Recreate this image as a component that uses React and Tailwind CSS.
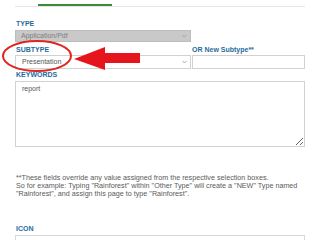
import React from "react";

const Chevron = () => (
  <svg width="5" height="4" viewBox="0 0 5 4" className="shrink-0">
    <path d="M0.5 1 L2.5 3 L4.5 1" fill="none" stroke="#9a9a9a" strokeWidth="0.8" />
  </svg>
);

const Label = ({ children, className = "" }) => (
  <div className={`text-[7px] leading-[8px] font-bold text-[#1f6c9c] ${className}`}>
    {children}
  </div>
);

const App = () => {
  return (
    <div className="relative w-[320px] h-[240px] overflow-hidden bg-white font-['Liberation_Sans',Arial,sans-serif]">
      <div className="px-[15px]">
        {/* tab strip */}
        <div className="pt-[4px] border-b border-[#e6e6e6]">
          <div className="ml-[23px] w-[74px] h-[2px] bg-[#3a8a3e]" />
        </div>

        <Label className="mt-[13px] pl-[1px]">TYPE</Label>
        <div className="mt-[2px] w-[176px] h-[12px] bg-[#c9c9c9] border border-[#bdbdbd] flex items-center justify-between pl-[5px] pr-[3px]">
          <span className="text-[7px] text-[#7d7d7d]">Application/Pdf</span>
          <Chevron />
        </div>

        <div className="mt-[4px] grid grid-cols-[177px_113px]">
          <div>
            <Label className="pl-[1px]">SUBTYPE</Label>
            <div className="mt-[1px] w-[176px] h-[14px] bg-white border border-[#d2d2d2] flex items-center justify-between pl-[6px] pr-[3px]">
              <span className="text-[7px] text-[#555]">Presentation</span>
              <Chevron />
            </div>
          </div>
          <div>
            <Label>OR New Subtype**</Label>
            <div className="mt-[1px] h-[14px] bg-white border border-[#d2d2d2]" />
          </div>
        </div>

        <Label className="mt-[2px] pl-[1px]">KEYWORDS</Label>
        <textarea
          readOnly
          defaultValue="report"
          className="block mt-[2px] w-[290px] h-[66px] border border-[#d2d2d2] px-[6px] py-[3px] text-[7px] leading-[8px] text-[#555] outline-none"
        />

        <p className="mt-[27px] pl-[1px] text-[7.2px] leading-[8px] text-[#5a5a5a]">
          **These fields override any value assigned from the respective selection boxes.
          <br />
          So for example: Typing "Rainforest" within "Other Type" will create a "NEW" Type named
          <br />
          "Rainforest", and assign this page to type "Rainforest".
        </p>

        <Label className="mt-[27px] pl-[1px]">ICON</Label>
        <div className="mt-[2px] w-[290px] h-[14px] border border-[#d8d8d8]" />
      </div>

      {/* red annotation overlay */}
      <svg
        className="absolute left-0 top-0 pointer-events-none"
        width="320"
        height="240"
        viewBox="0 0 320 240"
      >
        <ellipse cx="37" cy="56" rx="34" ry="15" fill="none" stroke="#e0241f" strokeWidth="2" />
        <polygon
          points="74,59 105,47 105,53 140,53 140,63 105,63 105,70"
          fill="#e6141c"
        />
      </svg>
    </div>
  );
};

export default App;
